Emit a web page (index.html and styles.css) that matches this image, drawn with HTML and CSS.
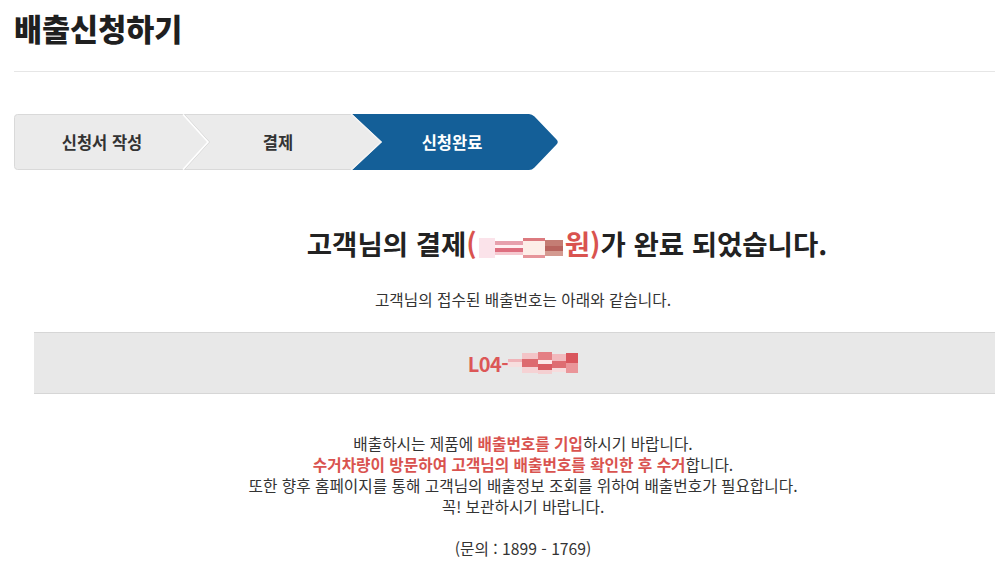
FILE: index.html
```html
<!DOCTYPE html>
<html lang="ko">
<head>
<meta charset="utf-8">
<title>배출신청하기</title>
<link rel="stylesheet" href="styles.css">
</head>
<body>
<div class="page">
  <h1 class="title">배출신청하기</h1>
  <div class="divider"></div>

  <div class="steps">
    <svg class="steps-bg" width="548" height="56" viewBox="0 0 548 56">
      <rect x="0.5" y="0.5" width="372" height="55" rx="3" ry="3" fill="#ebebeb" stroke="#d9d9d9"/>
      <polyline points="170.5,0.5 195.5,28 170.5,55.5" fill="none" stroke="#d8d8d8" stroke-width="1"/>
      <polyline points="169,0.5 194,28 169,55.5" fill="none" stroke="#ffffff" stroke-width="1.6"/>
      <path d="M338,0 H515 Q518,0 520.5,2.5 L542.5,25.5 Q545,28 542.5,30.5 L520.5,53.5 Q518,56 515,56 H338 L368,28 Z" fill="#145f98"/>
      <polyline points="337,0 367,28 337,56" fill="none" stroke="#f4f4f4" stroke-width="1.4"/>
    </svg>
    <div class="steps-labels">
      <span class="step step-1">신청서 작성</span>
      <span class="step step-2">결제</span>
      <span class="step step-3 active">신청완료</span>
    </div>
  </div>

  <h2 class="headline">고객님의 결제<span class="red">(</span><span class="blur-amount"><i class="b1"></i><i class="b2"></i><i class="b3"></i><i class="b4"></i></span><span class="red">원)</span>가 완료 되었습니다.</h2>

  <p class="sub">고객님의 접수된 배출번호는 아래와 같습니다.</p>

  <div class="code-box">
    <span class="code">L04-</span><span class="blur-code"><i class="c1"></i><i class="c2"></i><i class="c3"></i><i class="c4"></i><i class="c5"></i></span>
  </div>

  <p class="notice">
    배출하시는 제품에 <b class="red">배출번호를 기입</b>하시기 바랍니다.<br>
    <b class="red">수거차량이 방문하여 고객님의 배출번호를 확인한 후 수거</b>합니다.<br>
    또한 향후 홈페이지를 통해 고객님의 배출정보 조회를 위하여 배출번호가 필요합니다.<br>
    꼭! 보관하시기 바랍니다.<br>
    <br>
    (문의 : 1899 - 1769)
  </p>
</div>
</body>
</html>
```

FILE: styles.css
```css
html, body {
  margin: 0;
  padding: 0;
  background: #ffffff;
  overflow: hidden;
}

body {
  font-family: "Noto Sans CJK KR", "Noto Sans", sans-serif;
  color: #333333;
}

.page {
  width: 1018px;
  margin-left: 14px;
}

.title {
  margin: 0;
  padding-top: 8px;
  font-size: 30.5px;
  line-height: 40px;
  font-weight: 900;
  color: #1f1f1f;
}

.divider {
  margin-top: 23px;
  border-top: 1px solid #e6e6e6;
}

.steps {
  margin-top: 42px;
  display: grid;
  width: 548px;
  height: 56px;
}

.steps-bg,
.steps-labels {
  grid-area: 1 / 1;
}

.steps-labels {
  display: flex;
  align-items: center;
  height: 56px;
}

.step {
  display: block;
  text-align: center;
  font-size: 16.5px;
  font-weight: 700;
  color: #333333;
}

.step-1 { width: 176px; }
.step-2 { width: 176px; }
.step-3 { width: 172px; }

.step.active { color: #ffffff; }

.red { color: #d9534f; }

.headline {
  margin: 55px 0 0;
  padding-left: 88px;
  text-align: center;
  font-size: 27.5px;
  line-height: 36px;
  font-weight: 700;
  color: #222222;
}

.blur-amount {
  display: inline-flex;
  align-items: center;
  vertical-align: -3px;
  height: 22px;
  margin: 0 2px;
}

.blur-amount i,
.blur-code i {
  display: block;
}

.blur-amount .b1 { width: 16px; height: 20px; background: #fbe3ea; }
.blur-amount .b2 { width: 28px; height: 14px; background: linear-gradient(#e7a0ad 0 25%, #fff0f2 25% 50%, #de6f80 50% 75%, #f5c9d0 75%); }
.blur-amount .b3 { width: 22px; height: 14px; background: #fdeee8; border-top: 3px solid #dc7a7f; border-bottom: 3px solid #e6959a; }
.blur-amount .b4 { width: 18px; height: 16px; background: linear-gradient(#c47d74 0 40%, #b8645e 40% 70%, #d49a90 70%); }

.sub {
  margin: 29px 0 0;
  text-align: center;
  font-size: 15.7px;
  line-height: 20px;
  color: #333333;
}

.code-box {
  margin: 22px 20px 0;
  height: 60px;
  background: #e8e8e8;
  border-top: 1px solid #d6d6d6;
  border-bottom: 1px solid #d6d6d6;
  display: flex;
  align-items: center;
  justify-content: center;
}

.code {
  font-size: 20px;
  font-weight: 700;
  color: #dc5757;
  letter-spacing: -0.5px;
}

.blur-code {
  display: inline-flex;
  align-items: center;
  height: 24px;
}

.blur-code .c1 { width: 14px; height: 8px; background: linear-gradient(#f0b3b8 0 40%, #f7dede 40%); }
.blur-code .c2 { width: 16px; height: 20px; background: linear-gradient(#f3c4c7 0 30%, #dd6b70 30% 70%, #f5d2d4 70%); }
.blur-code .c3 { width: 14px; height: 22px; background: linear-gradient(#e47f84 0 35%, #fbe8e8 35% 55%, #d95c62 55% 80%, #f4cfd1 80%); }
.blur-code .c4 { width: 14px; height: 18px; background: linear-gradient(#f2b9bd 0 40%, #de6d72 40% 75%, #f7dcdd 75%); }
.blur-code .c5 { width: 12px; height: 20px; background: linear-gradient(#d9565d 0 50%, #ea9599 50%); }

.notice {
  margin: 39px 0 0;
  text-align: center;
  font-size: 15.7px;
  line-height: 21px;
  color: #333333;
}

.notice b {
  font-weight: 700;
}
```
